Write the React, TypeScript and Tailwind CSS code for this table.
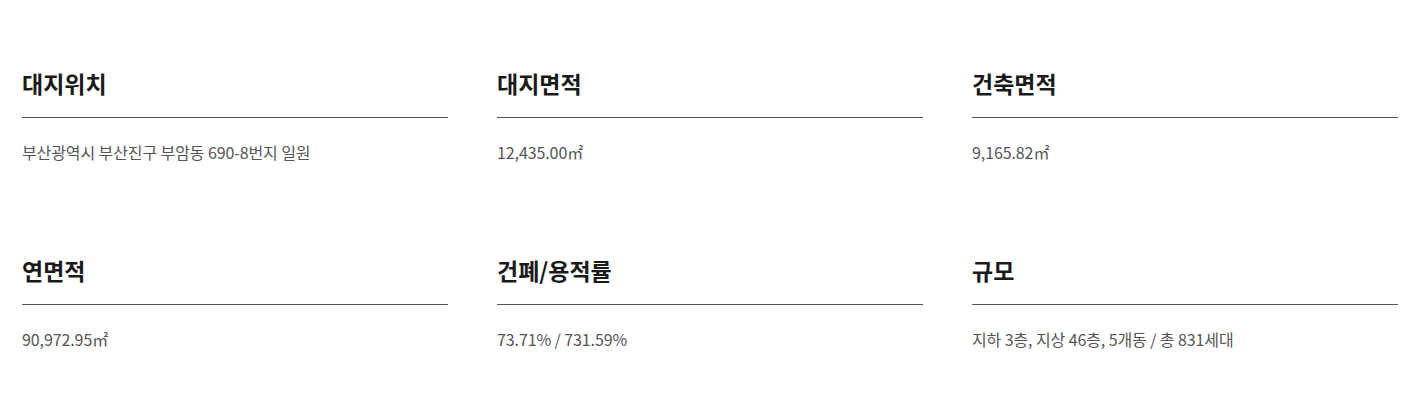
const items = [
  { title: "대지위치", value: "부산광역시 부산진구 부암동 690-8번지 일원" },
  { title: "대지면적", value: "12,435.00㎡" },
  { title: "건축면적", value: "9,165.82㎡" },
  { title: "연면적", value: "90,972.95㎡" },
  { title: "건폐/용적률", value: "73.71% / 731.59%" },
  { title: "규모", value: "지하 3층, 지상 46층, 5개동 / 총 831세대" },
];

export default function App() {
  return (
    <div
      className="min-h-[407px] bg-white pt-[66px]"
      style={{ fontFamily: '"Noto Sans CJK KR", "Noto Sans", sans-serif' }}
    >
      <ul className="ml-[22px] grid w-[1376px] grid-cols-3 gap-x-[49px] gap-y-[89px]">
        {items.map((item) => (
          <li key={item.title}>
            <h3 className="border-b border-[#555] pb-[17px] text-[23px] leading-[34px] font-bold text-[#1a1a1a]">
              {item.title}
            </h3>
            <p className="pt-[22px] text-[16px] leading-[24px] tracking-[-0.1px] text-[#555]">
              {item.value}
            </p>
          </li>
        ))}
      </ul>
    </div>
  );
}
